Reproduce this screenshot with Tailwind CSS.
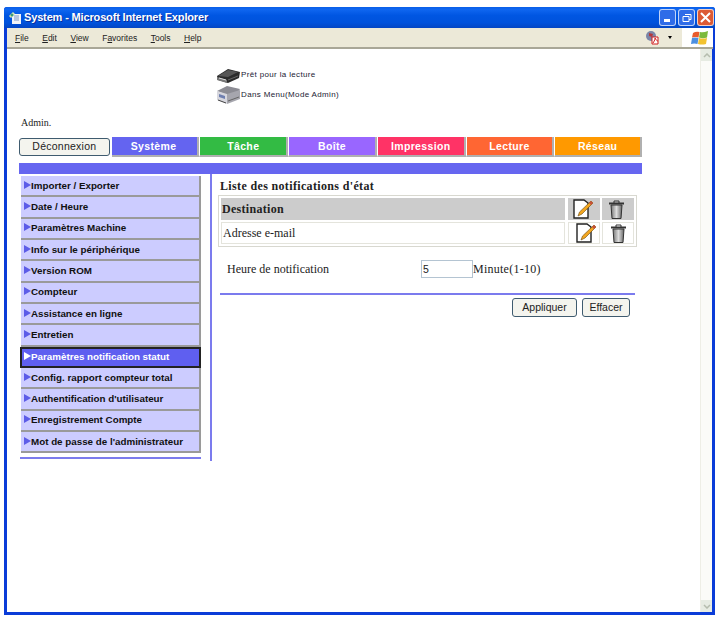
<!DOCTYPE html>
<html><head><meta charset="utf-8"><script src="https://cdn.jsdelivr.net/npm/@tailwindcss/browser@4"></script></head>
<body class="bg-white overflow-hidden">
<div class="w-[717px] h-[618px] pt-[7px] pl-[4px] bg-white">
<div class="w-[711px] h-[608px] flex flex-col border-x-[3px] border-b-[3px] border-[#0a3cd8] rounded-t-[3px] font-['Liberation_Sans',sans-serif]">
  <!-- title bar -->
  <div class="h-[21px] -mx-[3px] shrink-0 flex items-center pl-[5px] pr-[1px] rounded-t-[3px] bg-[linear-gradient(180deg,#0a5fe8_0%,#0f66f0_12%,#0056e2_40%,#0052dc_75%,#0346c4_100%)]">
    <svg class="w-[13px] h-[14px] mr-[2px]" viewBox="0 0 13 14"><path d="M3 3h9v10H3z" fill="#f2f4f8"/><path d="M5 5h5M5 7h5M5 9h5" stroke="#7d97c8"/><path d="M0 5l4-4 2 2-4 4z" fill="#d9e6b8"/><circle cx="3" cy="4" r="1.5" fill="#3d9d7a"/></svg>
    <span class="text-white font-bold text-[11px] tracking-[-0.15px] whitespace-nowrap [text-shadow:1px_1px_0_#0a2f9c]">System - Microsoft Internet Explorer</span>
    <div class="ml-auto flex gap-[2px]">
      <div class="w-[17px] h-[17px] rounded-[3px] border border-white/70 bg-[#2f6ce8] flex items-end pl-[4px] pb-[3px]"><div class="w-[6px] h-[3px] bg-white"></div></div>
      <div class="w-[17px] h-[17px] rounded-[3px] border border-white/70 bg-[#2f6ce8] flex items-center justify-center"><svg class="w-[10px] h-[10px]" viewBox="0 0 10 10" fill="none" stroke="#fff"><path d="M3 1.5h6v5H7M1 3.5h6v5H1z"/></svg></div>
      <div class="w-[17px] h-[17px] rounded-[3px] border border-white/70 bg-[#dc5a34] flex items-center justify-center"><svg class="w-[11px] h-[11px]" viewBox="0 0 11 11" stroke="#fff" stroke-width="2"><path d="M1 1l9 9M10 1l-9 9"/></svg></div>
    </div>
  </div>
  <!-- menu bar -->
  <div class="h-[21px] shrink-0 flex items-center bg-[#ece9d8] border-b-2 border-[#a9a797] text-[8.5px] text-[#222] -mr-[1px]">
    <div class="flex gap-[13.5px] pl-[8px] pt-[1px]">
      <span><u>F</u>ile</span><span><u>E</u>dit</span><span><u>V</u>iew</span><span>F<u>a</u>vorites</span><span><u>T</u>ools</span><span><u>H</u>elp</span>
    </div>
    <div class="ml-auto flex items-center h-full">
      <svg class="w-[14px] h-[15px]" viewBox="0 0 14 15"><circle cx="6" cy="6" r="5" fill="#7b86a8"/><path d="M4 3l4 1-1 3-3-1z" fill="#b4383c"/><path d="M7 7h6v7H7z" fill="#fff" stroke="#d01c1c"/><path d="M8 13c2-3 2-4 2-5 1 2 2 3 3 3" stroke="#d01c1c" fill="none"/></svg>
      <span class="ml-[9px] mr-[10px] w-0 h-0 border-x-[2.5px] border-t-[3px] border-x-transparent border-t-black"></span>
      <div class="w-[31px] h-full bg-white flex items-center justify-center pl-[3px]">
        <svg class="w-[17px] h-[15px]" viewBox="0 0 17 15"><path d="M2 3q3-2 6.500-1l-1 5.500q-3-1-6.500 0z" fill="#e85a2c"/><path d="M9 2q3 1 8-1l-1 6.500q-4 1.500-8 0z" fill="#7dba3c"/><path d="M1 8q3-1 6.500 0l-1 6q-3-1-6.500 0z" fill="#4c8fe0"/><path d="M8 8q4 1 8 0l-1 6q-4 1-8 0z" fill="#f2c230"/></svg>
      </div>
    </div>
  </div>
  <!-- viewport -->
  <div class="flex flex-1 min-h-0">
    <div class="w-[693px] shrink-0 bg-white">
      <div class="h-[88px] flex flex-col">
        <div class="ml-[209px] mt-[17px] flex flex-col text-[8px] tracking-[0.35px] text-[#223]">
          <div class="h-[18px] flex items-center">
            <svg class="w-[25px] h-[17px]" viewBox="0 0 25 17"><path d="M1 9l11-7 12 3-1 6-11 5-10-3z" fill="#2b2b2b"/><path d="M2 9l10-6 10 2-10 5z" fill="#555"/><path d="M1 10l10 3v3l-10-3z" fill="#777"/><path d="M3 11l7 2" stroke="#ddd"/><path d="M12 13l10-4" stroke="#666"/></svg>
            <span>Prêt pour la lecture</span>
          </div>
          <div class="h-[21px] flex items-center">
            <svg class="w-[25px] h-[20px]" viewBox="0 0 25 20"><path d="M1 6l10-5 13 3-2 3-11 3z" fill="#8c8c94"/><path d="M1 6l10 3v10L1 15z" fill="#d7d7de"/><path d="M11 9l13-4v9l-13 5z" fill="#a6a6ae"/><path d="M3 9l6 2v3L3 12z" fill="#6f7fb0"/><path d="M2 15l8 3" stroke="#444"/><path d="M12 16l11-4" stroke="#666"/></svg>
            <span>Dans Menu(Mode Admin)</span>
          </div>
        </div>
        <div class="ml-[14px] mt-[10px] font-['Liberation_Serif',serif] text-[10px] text-[#222]">Admin.</div>
      </div>
      <!-- tabs -->
      <div class="ml-[12px] w-[623px] h-[20px] flex items-center">
        <button class="w-[91px] h-[18px] mr-[2px] rounded-[3px] border border-[#3f5b6f] bg-[#f4f4ee] text-[10.5px] tracking-[0.25px] text-[#222]">Déconnexion</button>
        <div class="w-[88px] h-[20px] flex items-center justify-center pr-[2px] pt-[2px] bg-[#6464f0] border-r-2 border-b-2 border-[#b0b0b0] text-white font-bold text-[10.5px] tracking-[0.35px]">Système</div>
        <div class="w-[89px] h-[20px] flex items-center justify-center pt-[2px] bg-[#33bb44] border-l border-r-2 border-b-2 border-l-white border-[#b0b0b0] text-white font-bold text-[10.5px] tracking-[0.35px]">Tâche</div>
        <div class="w-[89px] h-[20px] flex items-center justify-center pt-[2px] bg-[#9966ff] border-l border-r-2 border-b-2 border-l-white border-[#b0b0b0] text-white font-bold text-[10.5px] tracking-[0.35px]">Boîte</div>
        <div class="w-[89px] h-[20px] flex items-center justify-center pt-[2px] bg-[#ff3366] border-l border-r-2 border-b-2 border-l-white border-[#b0b0b0] text-white font-bold text-[10.5px] tracking-[0.35px]">Impression</div>
        <div class="w-[89px] h-[20px] flex items-center justify-center pt-[2px] bg-[#ff6633] border-l border-r-2 border-b-2 border-l-white border-[#b0b0b0] text-white font-bold text-[10.5px] tracking-[0.35px]">Lecture</div>
        <div class="w-[88px] h-[20px] flex items-center justify-center pt-[2px] bg-[#ff9900] border-l border-r-2 border-b-2 border-l-white border-[#b0b0b0] text-white font-bold text-[10.5px] tracking-[0.35px]">Réseau</div>
      </div>
      <div class="ml-[12px] mt-[6px] w-[623px] h-[11px] bg-[#6666f0]"></div>
      <div class="flex">
        <!-- sidebar -->
        <div class="ml-[13px] w-[182px] pt-[2px]">
          <div class="w-[180px] text-[9.8px] font-bold text-[#111] ml-[1px]">
            <div class="h-[21.33px] flex items-center pl-[3px] pt-[1px] bg-[#ccccff] border-r-2 border-b-2 border-[#9a9a9a]"><svg class="w-[7px] h-[8px] shrink-0 -mt-[3px]" viewBox="0 0 7 8"><path d="M0 0l7 4-7 4z" fill="#5c5ce8"/></svg>Importer / Exporter</div>
            <div class="h-[21.33px] flex items-center pl-[3px] pt-[1px] bg-[#ccccff] border-r-2 border-b-2 border-[#9a9a9a]"><svg class="w-[7px] h-[8px] shrink-0 -mt-[3px]" viewBox="0 0 7 8"><path d="M0 0l7 4-7 4z" fill="#5c5ce8"/></svg>Date / Heure</div>
            <div class="h-[21.33px] flex items-center pl-[3px] pt-[1px] bg-[#ccccff] border-r-2 border-b-2 border-[#9a9a9a]"><svg class="w-[7px] h-[8px] shrink-0 -mt-[3px]" viewBox="0 0 7 8"><path d="M0 0l7 4-7 4z" fill="#5c5ce8"/></svg>Paramètres Machine</div>
            <div class="h-[21.33px] flex items-center pl-[3px] pt-[1px] bg-[#ccccff] border-r-2 border-b-2 border-[#9a9a9a]"><svg class="w-[7px] h-[8px] shrink-0 -mt-[3px]" viewBox="0 0 7 8"><path d="M0 0l7 4-7 4z" fill="#5c5ce8"/></svg>Info sur le périphérique</div>
            <div class="h-[21.33px] flex items-center pl-[3px] pt-[1px] bg-[#ccccff] border-r-2 border-b-2 border-[#9a9a9a]"><svg class="w-[7px] h-[8px] shrink-0 -mt-[3px]" viewBox="0 0 7 8"><path d="M0 0l7 4-7 4z" fill="#5c5ce8"/></svg>Version ROM</div>
            <div class="h-[21.33px] flex items-center pl-[3px] pt-[1px] bg-[#ccccff] border-r-2 border-b-2 border-[#9a9a9a]"><svg class="w-[7px] h-[8px] shrink-0 -mt-[3px]" viewBox="0 0 7 8"><path d="M0 0l7 4-7 4z" fill="#5c5ce8"/></svg>Compteur</div>
            <div class="h-[21.33px] flex items-center pl-[3px] pt-[1px] bg-[#ccccff] border-r-2 border-b-2 border-[#9a9a9a]"><svg class="w-[7px] h-[8px] shrink-0 -mt-[3px]" viewBox="0 0 7 8"><path d="M0 0l7 4-7 4z" fill="#5c5ce8"/></svg>Assistance en ligne</div>
            <div class="h-[21.33px] flex items-center pl-[3px] pt-[1px] bg-[#ccccff] border-r-2 border-b-2 border-[#9a9a9a]"><svg class="w-[7px] h-[8px] shrink-0 -mt-[3px]" viewBox="0 0 7 8"><path d="M0 0l7 4-7 4z" fill="#5c5ce8"/></svg>Entretien</div>
            <div class="h-[21.33px] flex items-center pl-[2px] bg-[#5f5ff0] border-2 border-[#222] text-white -ml-[1px]"><svg class="w-[7px] h-[8px] shrink-0 -mt-[3px]" viewBox="0 0 7 8"><path d="M0 0l7 4-7 4z" fill="#fff"/></svg>Paramètres notification statut</div>
            <div class="h-[21.33px] flex items-center pl-[3px] pt-[1px] bg-[#ccccff] border-r-2 border-b-2 border-[#9a9a9a]"><svg class="w-[7px] h-[8px] shrink-0 -mt-[3px]" viewBox="0 0 7 8"><path d="M0 0l7 4-7 4z" fill="#5c5ce8"/></svg>Config. rapport compteur total</div>
            <div class="h-[21.33px] flex items-center pl-[3px] pt-[1px] bg-[#ccccff] border-r-2 border-b-2 border-[#9a9a9a]"><svg class="w-[7px] h-[8px] shrink-0 -mt-[3px]" viewBox="0 0 7 8"><path d="M0 0l7 4-7 4z" fill="#5c5ce8"/></svg>Authentification d'utilisateur</div>
            <div class="h-[21.33px] flex items-center pl-[3px] pt-[1px] bg-[#ccccff] border-r-2 border-b-2 border-[#9a9a9a]"><svg class="w-[7px] h-[8px] shrink-0 -mt-[3px]" viewBox="0 0 7 8"><path d="M0 0l7 4-7 4z" fill="#5c5ce8"/></svg>Enregistrement Compte</div>
            <div class="h-[21.33px] flex items-center pl-[3px] pt-[1px] bg-[#ccccff] border-r-2 border-b-2 border-[#9a9a9a]"><svg class="w-[7px] h-[8px] shrink-0 -mt-[3px]" viewBox="0 0 7 8"><path d="M0 0l7 4-7 4z" fill="#5c5ce8"/></svg>Mot de passe de l'administrateur</div>
          </div>
          <div class="mt-[4px] h-[2px] w-[181px] bg-[#7b7bee]"></div>
        </div>
        <!-- divider -->
        <div class="ml-[8px] w-[2px] h-[287px] bg-[#7b7bee]"></div>
        <!-- main -->
        <div class="ml-[6px] w-[419px] font-['Liberation_Serif',serif] text-[#222]">
          <div class="h-[21px] pl-[2px] pt-[5px] text-[12px] font-bold leading-[14px] tracking-[0.35px]">Liste des notifications d'état</div>
          <div class="h-[52px] border border-[#d8d8d0] p-[2px] flex flex-col gap-[2px] text-[12px]">
            <div class="h-[22px] flex">
              <div class="w-[344px] mr-[3px] bg-[#cccccc] flex items-center pl-[1px] font-bold tracking-[0.3px]">Destination</div>
              <div class="w-[32px] mr-[2px] bg-[#cccccc] flex items-center pl-[5px]"><svg class="w-[20px] h-[20px]" viewBox="0 0 20 20"><path d="M1 1h10l4 3v15H1z" fill="#fff" stroke="#222" stroke-width="1.400"/><path d="M18 2l2 2-11 11-4 2 1.500-4z" fill="#f2a51e" stroke="#6a4a10" stroke-width=".6"/><path d="M18 2l2 2-2 2-2-2z" fill="#c8503a"/></svg></div>
              <div class="w-[32px] bg-[#cccccc] flex items-center pl-[6px]"><svg class="w-[17px] h-[19px]" viewBox="0 0 17 19"><defs><linearGradient id="t1"><stop offset="0" stop-color="#777"/><stop offset=".5" stop-color="#ddd"/><stop offset="1" stop-color="#666"/></linearGradient></defs><path d="M1 3.500h15" stroke="#333" stroke-width="2"/><path d="M6 3V1h5v2" fill="none" stroke="#333"/><path d="M3 5h11l-1 13.500H4z" fill="url(#t1)" stroke="#333"/></svg></div>
            </div>
            <div class="h-[22px] flex">
              <div class="w-[344px] mr-[3px] border border-[#e4e4dc] flex items-center pl-[1px]">Adresse e-mail</div>
              <div class="w-[32px] mr-[2px] border border-[#e4e4dc] flex items-center pl-[7px]"><svg class="w-[20px] h-[20px]" viewBox="0 0 20 20"><path d="M1 1h10l4 3v15H1z" fill="#fff" stroke="#222" stroke-width="1.400"/><path d="M18 2l2 2-11 11-4 2 1.500-4z" fill="#f2a51e" stroke="#6a4a10" stroke-width=".6"/><path d="M18 2l2 2-2 2-2-2z" fill="#c8503a"/></svg></div>
              <div class="w-[32px] border border-[#e4e4dc] flex items-center pl-[7px]"><svg class="w-[17px] h-[19px]" viewBox="0 0 17 19"><defs><linearGradient id="t2"><stop offset="0" stop-color="#777"/><stop offset=".5" stop-color="#ddd"/><stop offset="1" stop-color="#666"/></linearGradient></defs><path d="M1 3.500h15" stroke="#333" stroke-width="2"/><path d="M6 3V1h5v2" fill="none" stroke="#333"/><path d="M3 5h11l-1 13.500H4z" fill="url(#t2)" stroke="#333"/></svg></div>
            </div>
          </div>
          <div class="mt-[12px] h-[19px] flex items-center pl-[9px] text-[12px]">
            <span class="w-[194px]">Heure de notification</span>
            <input value="5" class="w-[52px] h-[18px] border border-[#b4c4d2] pl-[1px] text-[10.5px] font-['Liberation_Sans',sans-serif] bg-white">
            <span class="tracking-[0.25px]">Minute(1-10)</span>
          </div>
          <div class="mt-[15px] ml-[2px] h-[2px] w-[415px] bg-[#7b7bee]"></div>
          <div class="mt-[3px] ml-[2px] w-[410px] flex justify-end gap-[5px] font-['Liberation_Sans',sans-serif] text-[10.5px]">
            <button class="w-[65px] h-[19px] rounded-[3px] border border-[#3f5b6f] bg-[#f4f4ee] text-[#222]">Appliquer</button>
            <button class="w-[48px] h-[19px] rounded-[3px] border border-[#3f5b6f] bg-[#f4f4ee] text-[#222]">Effacer</button>
          </div>
        </div>
      </div>
    </div>
    <!-- scrollbar -->
    <div class="w-[12px] shrink-0 bg-[#fbfbf8] border-l border-[#eeeee6] flex flex-col justify-between">
      <div class="h-[12px] bg-[#e6ebe2] flex items-center justify-center"><svg class="w-[8px] h-[5px]" viewBox="0 0 8 5" fill="none" stroke="#b5bcae" stroke-width="1.500"><path d="M1 4l3-3 3 3"/></svg></div>
      <div class="h-[12px] bg-[#e6ebe2] flex items-center justify-center"><svg class="w-[8px] h-[5px]" viewBox="0 0 8 5" fill="none" stroke="#b5bcae" stroke-width="1.500"><path d="M1 1l3 3 3-3"/></svg></div>
    </div>
  </div>
</div>
</div>
</body></html>
